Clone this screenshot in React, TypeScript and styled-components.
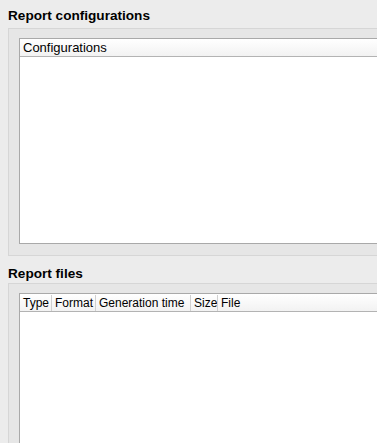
import React from "react";
import styled, { createGlobalStyle } from "styled-components";

const GlobalStyle = createGlobalStyle`
  html, body {
    margin: 0;
    padding: 0;
    background: #ececec;
    overflow: hidden;
  }
  body {
    font-family: "Liberation Sans", Arial, sans-serif;
    color: #000;
  }
`;

const Page = styled.div`
  width: 377px;
  height: 443px;
  overflow: hidden;
  display: flex;
  flex-direction: column;
`;

const Title = styled.div<{ $top: number; $bottom: number }>`
  font-size: 13.6px;
  font-weight: bold;
  line-height: 16px;
  padding: ${(p) => p.$top}px 0 0 8px;
  margin-bottom: ${(p) => p.$bottom}px;
  white-space: nowrap;
`;

const GroupBox = styled.div<{ $height: number }>`
  margin-left: 8px;
  width: 400px;
  height: ${(p) => p.$height}px;
  flex: none;
  box-sizing: border-box;
  border: 1px solid #d6d6d6;
  border-right: none;
  background: #e6e6e6;
  padding: 9px 0 11px 10px;
  display: flex;
`;

const Table = styled.div`
  flex: 1;
  display: flex;
  flex-direction: column;
  background: #fff;
  border: 1px solid #a9a9a9;
  border-right: none;
`;

const HeaderRow = styled.div`
  display: flex;
  height: 16px;
  padding-top: 1px;
  background: linear-gradient(#ffffff, #f2f2f2);
  border-bottom: 1px solid #b3b3b3;
`;

const HeaderCell = styled.div<{ $width?: number; $size?: number }>`
  width: ${(p) => (p.$width ? `${p.$width}px` : "auto")};
  flex: ${(p) => (p.$width ? "none" : "1")};
  box-sizing: border-box;
  padding-left: 3px;
  font-size: ${(p) => p.$size ?? 12}px;
  line-height: 16px;
  white-space: nowrap;
  overflow: hidden;
  & + & {
    border-left: 1px solid #d0d0d0;
  }
`;

const Body = styled.div`
  flex: 1;
`;

export default function App() {
  return (
    <Page>
      <GlobalStyle />
      <Title $top={8} $bottom={4}>Report configurations</Title>
      <GroupBox $height={228}>
        <Table>
          <HeaderRow>
            <HeaderCell $size={13}>Configurations</HeaderCell>
          </HeaderRow>
          <Body />
        </Table>
      </GroupBox>
      <Title $top={10} $bottom={1}>Report files</Title>
      <GroupBox $height={240}>
        <Table>
          <HeaderRow>
            <HeaderCell $width={31}>Type</HeaderCell>
            <HeaderCell $width={44}>Format</HeaderCell>
            <HeaderCell $width={95}>Generation time</HeaderCell>
            <HeaderCell $width={27}>Size</HeaderCell>
            <HeaderCell>File</HeaderCell>
          </HeaderRow>
          <Body />
        </Table>
      </GroupBox>
    </Page>
  );
}
